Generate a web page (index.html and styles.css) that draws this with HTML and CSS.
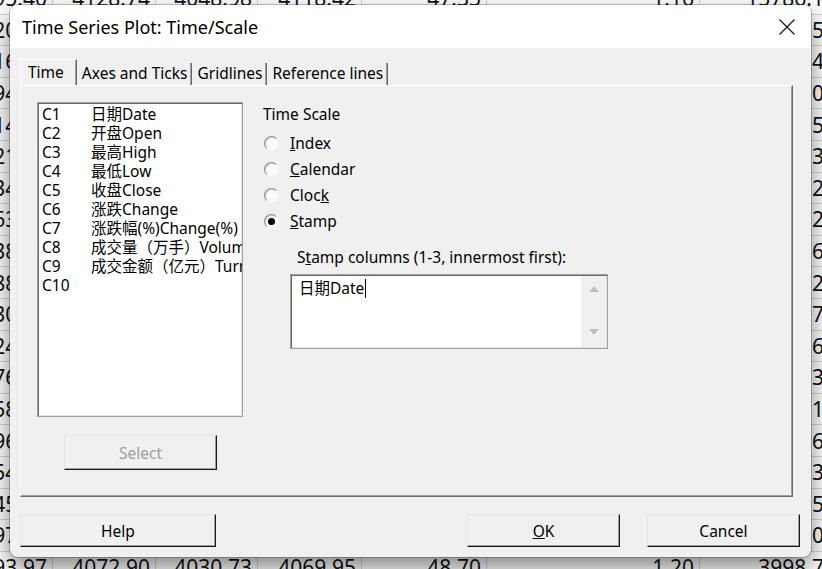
FILE: index.html
```html
<!DOCTYPE html>
<html lang="en">
<head>
<meta charset="utf-8">
<title>Time Series Plot: Time/Scale</title>
<link rel="stylesheet" href="styles.css">
</head>
<body>
<div class="sheet">
  <div class="row"><span>4095.40</span><span>4128.74</span><span>4048.98</span><span>4118.42</span><span>47.35</span><span>1.16</span><span>15786.12</span></div>
  <div class="row"><span>4120.36</span><span>4102.15</span><span>4088.20</span><span>4110.57</span><span>-7.85</span><span>-0.19</span><span>14523.58</span></div>
  <div class="row"><span>4116.52</span><span>4095.63</span><span>4071.44</span><span>4098.31</span><span>-12.26</span><span>-0.30</span><span>16240.47</span></div>
  <div class="row"><span>4094.18</span><span>4083.02</span><span>4066.91</span><span>4079.55</span><span>-18.76</span><span>-0.46</span><span>13874.06</span></div>
  <div class="row"><span>4114.67</span><span>4101.39</span><span>4080.12</span><span>4109.88</span><span>30.33</span><span>0.74</span><span>15102.59</span></div>
  <div class="row"><span>4121.05</span><span>4111.74</span><span>4093.50</span><span>4117.26</span><span>7.38</span><span>0.18</span><span>14788.31</span></div>
  <div class="row"><span>4134.29</span><span>4120.48</span><span>4104.66</span><span>4129.03</span><span>11.77</span><span>0.29</span><span>13965.24</span></div>
  <div class="row"><span>4063.81</span><span>4125.90</span><span>4058.17</span><span>4061.42</span><span>-67.61</span><span>-1.64</span><span>15530.28</span></div>
  <div class="row"><span>4038.44</span><span>4055.31</span><span>4022.09</span><span>4035.80</span><span>-25.62</span><span>-0.63</span><span>16012.63</span></div>
  <div class="row"><span>4088.12</span><span>4040.27</span><span>4036.55</span><span>4084.96</span><span>49.16</span><span>1.22</span><span>14219.27</span></div>
  <div class="row"><span>4130.57</span><span>4090.63</span><span>4087.40</span><span>4127.19</span><span>42.23</span><span>1.03</span><span>15377.72</span></div>
  <div class="row"><span>4124.93</span><span>4126.58</span><span>4101.72</span><span>4112.64</span><span>-14.55</span><span>-0.35</span><span>14690.65</span></div>
  <div class="row"><span>4076.30</span><span>4109.35</span><span>4068.24</span><span>4073.08</span><span>-39.56</span><span>-0.96</span><span>13458.39</span></div>
  <div class="row"><span>4058.61</span><span>4070.12</span><span>4041.93</span><span>4055.47</span><span>-17.61</span><span>-0.43</span><span>15821.19</span></div>
  <div class="row"><span>4096.25</span><span>4057.86</span><span>4053.30</span><span>4093.71</span><span>38.24</span><span>0.94</span><span>14936.61</span></div>
  <div class="row"><span>4054.70</span><span>4090.44</span><span>4049.85</span><span>4051.26</span><span>-42.45</span><span>-1.04</span><span>13790.33</span></div>
  <div class="row"><span>4045.88</span><span>4052.69</span><span>4030.17</span><span>4043.19</span><span>-8.07</span><span>-0.20</span><span>15266.52</span></div>
  <div class="row"><span>4097.14</span><span>4046.33</span><span>4042.08</span><span>4094.62</span><span>51.43</span><span>1.27</span><span>14105.08</span></div>
  <div class="row"><span>4093.97</span><span>4072.90</span><span>4030.73</span><span>4069.95</span><span>48.70</span><span>1.20</span><span>3998.75</span></div>
</div>

<div class="dialog">
  <div class="titlebar">
    <span class="title">Time Series Plot: Time/Scale</span>
    <svg class="close" width="16" height="16" viewBox="0 0 16 16"><path d="M0.5 0.5 L15.5 15.5 M15.5 0.5 L0.5 15.5" stroke="#1a1a1a" stroke-width="1.3" fill="none"/></svg>
  </div>
  <div class="body">
    <div class="tabs">
      <div class="tab active">Time</div>
      <div class="tab">Axes and Ticks</div>
      <div class="tab">Gridlines</div>
      <div class="tab">Reference lines</div>
    </div>
    <div class="panel">
      <div class="leftcol">
        <div class="listbox">
          <div class="item"><span class="cn">C1</span><span>日期Date</span></div>
          <div class="item"><span class="cn">C2</span><span>开盘Open</span></div>
          <div class="item"><span class="cn">C3</span><span>最高High</span></div>
          <div class="item"><span class="cn">C4</span><span>最低Low</span></div>
          <div class="item"><span class="cn">C5</span><span>收盘Close</span></div>
          <div class="item"><span class="cn">C6</span><span>涨跌Change</span></div>
          <div class="item"><span class="cn">C7</span><span>涨跌幅(%)Change(%)</span></div>
          <div class="item"><span class="cn">C8</span><span>成交量（万手）Volume</span></div>
          <div class="item"><span class="cn">C9</span><span>成交金额（亿元）Turnover</span></div>
          <div class="item"><span class="cn">C10</span><span></span></div>
        </div>
        <div class="btn select disabled">Select</div>
      </div>
      <div class="rightcol">
        <div class="label">Time Scale</div>
        <div class="radios">
          <div class="radio"><span class="circle"></span><span><u>I</u>ndex</span></div>
          <div class="radio"><span class="circle"></span><span><u>C</u>alendar</span></div>
          <div class="radio"><span class="circle"></span><span>Cloc<u>k</u></span></div>
          <div class="radio"><span class="circle checked"></span><span><u>S</u>tamp</span></div>
        </div>
        <div class="stamplabel">S<u>t</u>amp columns (1-3, innermost first):</div>
        <div class="textbox">
          <div class="tbtext">日期Date<span class="caret"></span></div>
          <div class="tbscroll">
            <svg width="12" height="8" viewBox="0 0 12 8"><path d="M6 1 L11 7 L1 7 Z" fill="#bcbcbc"/></svg>
            <svg width="12" height="8" viewBox="0 0 12 8"><path d="M1 1 L11 1 L6 7 Z" fill="#bcbcbc"/></svg>
          </div>
        </div>
      </div>
    </div>
    <div class="footer">
      <div class="btn help">Help</div>
      <div class="spacer"></div>
      <div class="btn ok"><u>O</u>K</div>
      <div class="btn cancel">Cancel</div>
    </div>
  </div>
</div>
</body>
</html>
```

FILE: styles.css
```css
* { box-sizing: border-box; }

html, body {
  margin: 0;
  padding: 0;
}

body {
  width: 822px;
  height: 569px;
  overflow: hidden;
  position: relative;
  background: #ffffff;
  font-family: "Noto Sans", "Noto Sans CJK SC", sans-serif;
  color: #000;
}

/* background worksheet */
.sheet {
  margin: -17px 0 0 -40px;
  display: grid;
  grid-auto-rows: 31.6px;
  font-size: 21px;
  color: #111;
}

.row {
  display: grid;
  grid-template-columns: 93px 103px 102px 104px 125px 213px 140px;
}

.row span {
  display: flex;
  align-items: center;
  justify-content: flex-end;
  padding-right: 5px;
  border-right: 1px solid #d6d6d6;
  border-bottom: 1px solid #d6d6d6;
  white-space: nowrap;
  overflow: hidden;
}

.row span:last-child {
  padding-right: 3px;
}

/* dialog window */
.dialog {
  position: absolute;
  left: 10px;
  top: 5px;
  width: 801px;
  height: 552px;
  border-radius: 8px;
  background: #f0f0f0;
  overflow: hidden;
  display: flex;
  flex-direction: column;
  box-shadow: 0 0 0 1px rgba(0, 0, 0, 0.22), 0 10px 24px rgba(0, 0, 0, 0.5);
}

.titlebar {
  height: 43px;
  flex: none;
  background: #ffffff;
  display: flex;
  align-items: center;
  justify-content: space-between;
  padding: 0 16px 0 12px;
}

.title {
  font-size: 18px;
  color: #000;
}

.close {
  display: block;
}

.body {
  flex: 1;
  display: flex;
  flex-direction: column;
  padding: 11px 11px 0 10px;
  font-size: 15.5px;
}

.tabs {
  display: flex;
  align-items: flex-end;
  height: 26px;
}

.tab {
  height: 22px;
  line-height: 20px;
  padding: 0 4px 0 5px;
  border-right: 1px solid #696969;
  box-shadow: inset -1px 0 0 #a0a0a0;
  white-space: nowrap;
}

.tab.active {
  height: 26px;
  line-height: 24px;
  padding: 0 12px 0 7px;
  border-left: 1px solid #ffffff;
  border-top: 1px solid #ffffff;
}

.panel {
  height: 412px;
  margin-right: 7px;
  border-top: 1px solid #ffffff;
  border-left: 1px solid #ffffff;
  border-right: 1px solid #696969;
  border-bottom: 1px solid #696969;
  box-shadow: inset -1px -1px 0 #a0a0a0;
  display: flex;
  padding: 16px 0 0 16px;
}

.leftcol {
  width: 206px;
  display: flex;
  flex-direction: column;
}

.listbox {
  height: 315px;
  background: #ffffff;
  border: 1px solid #a0a0a0;
  box-shadow: inset 1px 1px 0 #696969, inset -1px -1px 0 #e3e3e3;
  padding: 2px 0 0 4px;
  overflow: hidden;
}

.item {
  height: 19px;
  line-height: 19px;
  display: flex;
  white-space: nowrap;
}

.cn {
  width: 49px;
  flex: none;
}

.btn {
  height: 33px;
  display: flex;
  align-items: center;
  justify-content: center;
  background: #f0f0f0;
  border-top: 1px solid #e3e3e3;
  border-left: 1px solid #e3e3e3;
  border-right: 1px solid #1a1a1a;
  border-bottom: 1px solid #1a1a1a;
  box-shadow: inset -1px -1px 0 #a0a0a0;
}

.select {
  margin: 18px 0 0 27px;
  width: 153px;
  height: 35px;
}

.disabled {
  color: #a0a0a0;
}

.rightcol {
  margin-left: 20px;
  padding-top: 2px;
  display: flex;
  flex-direction: column;
}

.label {
  height: 20px;
  line-height: 20px;
}

.radios {
  margin-top: 6px;
  display: flex;
  flex-direction: column;
}

.radio {
  height: 26px;
  display: flex;
  align-items: center;
}

.circle {
  width: 15px;
  height: 15px;
  margin: 0 11px 0 1px;
  border-radius: 50%;
  background: #fbfbfb;
  border: 1px solid;
  border-color: #8e8e8e #f4f4f4 #f4f4f4 #8e8e8e;
  box-shadow: inset 1px 1px 0 #cfcfcf;
  display: flex;
  align-items: center;
  justify-content: center;
}

.circle.checked::after {
  content: "";
  width: 7px;
  height: 7px;
  border-radius: 50%;
  background: #000;
}

.stamplabel {
  margin: 13px 0 0 34px;
  height: 20px;
  line-height: 20px;
}

.textbox {
  margin: 7px 0 0 27px;
  width: 318px;
  height: 75px;
  background: #ffffff;
  border: 1px solid #a0a0a0;
  box-shadow: inset 1px 1px 0 #696969, inset -1px -1px 0 #e3e3e3;
  display: flex;
  padding: 1px;
}

.tbtext {
  flex: 1;
  padding: 2px 0 0 7px;
  line-height: 20px;
  display: flex;
  align-items: flex-start;
}

.caret {
  display: inline-block;
  width: 1px;
  height: 19px;
  margin: 1px 0 0 1px;
  background: #000;
}

.tbscroll {
  width: 25px;
  background: #f0f0f0;
  display: flex;
  flex-direction: column;
  align-items: center;
  justify-content: space-between;
  padding: 9px 0 11px 0;
}

.tbscroll svg {
  display: block;
}

.footer {
  display: flex;
  padding-top: 17px;
}

.help {
  width: 196px;
}

.spacer {
  flex: 1;
}

.ok {
  width: 153px;
}

.cancel {
  width: 153px;
  margin-left: 27px;
}
```
